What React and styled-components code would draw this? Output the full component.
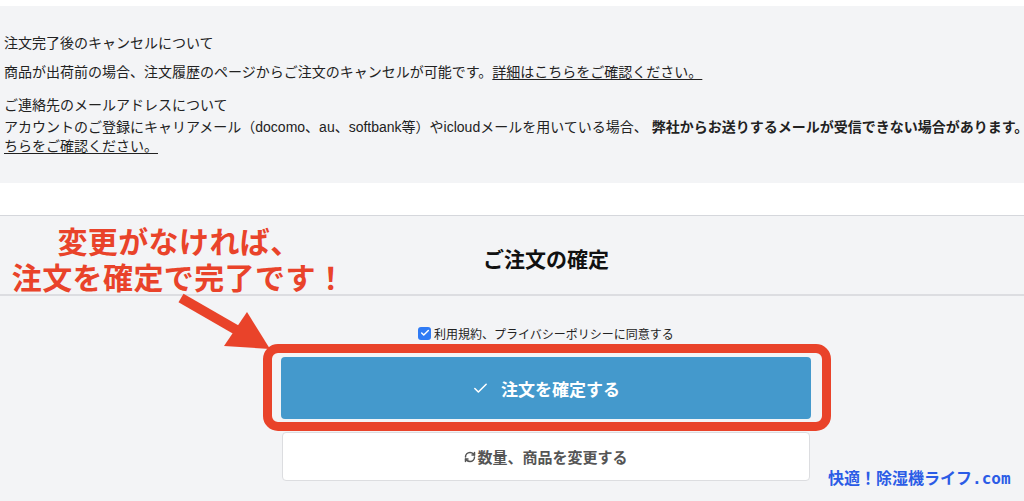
import styled, { createGlobalStyle } from "styled-components";
import { Check, RefreshCw } from "lucide-react";

const GlobalStyle = createGlobalStyle`
  html, body {
    margin: 0;
    padding: 0;
    background: #fff;
    overflow: hidden;
  }
  body {
    font-family: "Liberation Sans", "Noto Sans CJK JP", sans-serif;
    color: #222;
  }
`;

const Page = styled.div`
  width: 1092px;
  padding-top: 6px;
`;

const NoticePanel = styled.section`
  background: #f3f4f6;
  padding: 28px 4px 27px;
  font-size: 14px;
  line-height: 19px;
`;

const NoticeTitle = styled.div`
  margin-top: ${(p) => p.$gap || 0}px;
`;

const NoticeBody = styled.div`
  margin-top: ${(p) => p.$gap || 0}px;
  white-space: nowrap;
`;

const Link = styled.a`
  color: inherit;
  text-decoration: underline;
  text-underline-offset: 2px;
`;

const Strong = styled.b`
  font-weight: 700;
  margin-left: 4px;
`;

const Spacer = styled.div`
  height: 32px;
`;

const ConfirmSection = styled.section`
  position: relative;
  background: #f3f4f6;
  border-top: 1px solid #d5d7dc;
  padding-bottom: 20px;
`;

const SectionHeader = styled.header`
  height: 80px;
  display: flex;
  align-items: center;
  justify-content: center;
  border-bottom: 2px solid #dcdde1;
  padding-top: 5px;
  box-sizing: border-box;
`;

const HeaderTitle = styled.h2`
  margin: 0;
  font-size: 21px;
  font-weight: 700;
  color: #111;
  font-family: "Noto Sans CJK JP", sans-serif;
`;

const Actions = styled.div`
  width: 530px;
  margin: 0 auto;
  display: flex;
  flex-direction: column;
  align-items: center;
`;

const AgreeRow = styled.label`
  display: flex;
  align-items: center;
  gap: 3px;
  margin-top: 29px;
  height: 16px;
  font-size: 12px;
  color: #222;
  font-family: "Noto Sans CJK JP", sans-serif;
`;

const CheckBox = styled.span`
  width: 13px;
  height: 13px;
  border-radius: 3px;
  background: #2f7bf5;
  display: inline-flex;
  align-items: center;
  justify-content: center;
  color: #fff;
`;

const PrimaryWrap = styled.div`
  position: relative;
  width: 100%;
  margin-top: 16px;
`;

const Highlight = styled.div`
  position: absolute;
  top: -13px;
  left: -18px;
  right: -20px;
  bottom: -12px;
  border: 9px solid #e9432a;
  border-radius: 15px;
  pointer-events: none;
`;

const Button = styled.button`
  width: 100%;
  display: flex;
  align-items: center;
  justify-content: center;
  gap: ${(p) => (p.$primary ? 12 : 1)}px;
  height: ${(p) => (p.$primary ? 62 : 49)}px;
  border-radius: 4px;
  border: ${(p) => (p.$primary ? "none" : "1px solid #dcdde0")};
  background: ${(p) => (p.$primary ? "#4499cc" : "#fff")};
  color: ${(p) => (p.$primary ? "#fff" : "#555")};
  font-family: "Noto Sans CJK JP", sans-serif;
  font-size: ${(p) => (p.$primary ? 17 : 15)}px;
  font-weight: 700;
  cursor: pointer;
  padding: 0;
`;

const SecondaryButton = styled(Button)`
  margin-top: 13px;
  width: 528px;
`;

const Annotation = styled.div`
  position: absolute;
  top: 6px;
  left: 10px;
  width: 338px;
  text-align: center;
  color: #e9432a;
  font-family: "Noto Sans CJK JP", sans-serif;
  font-weight: 700;
  font-size: 30px;
  line-height: 36px;
  letter-spacing: 0.4px;
`;

const ArrowSvg = styled.svg`
  position: absolute;
  left: 0;
  top: 0;
  width: 300px;
  height: 150px;
  pointer-events: none;
`;

const Watermark = styled.div`
  position: absolute;
  left: 828px;
  top: 249px;
  color: #2b5ce6;
  font-family: "DejaVu Sans Mono", "Noto Sans CJK JP", monospace;
  font-size: 16px;
  font-weight: 700;
  white-space: nowrap;
`;

export default function App() {
  return (
    <>
      <GlobalStyle />
      <Page>
        <NoticePanel>
          <NoticeTitle>注文完了後のキャンセルについて</NoticeTitle>
          <NoticeBody $gap={10}>
            商品が出荷前の場合、注文履歴のページからご注文のキャンセルが可能です。
            <Link href="#">詳細はこちらをご確認ください。</Link>
          </NoticeBody>
          <NoticeTitle $gap={14}>ご連絡先のメールアドレスについて</NoticeTitle>
          <NoticeBody $gap={3}>
            アカウントのご登録にキャリアメール（docomo、au、softbank等）やicloudメールを用いている場合、
            <Strong>弊社からお送りするメールが受信できない場合があります。</Strong>
            <Link href="#">こ</Link>
            <br />
            <Link href="#">ちらをご確認ください。</Link>
          </NoticeBody>
        </NoticePanel>
        <Spacer />
        <ConfirmSection>
          <SectionHeader>
            <HeaderTitle>ご注文の確定</HeaderTitle>
          </SectionHeader>
          <Actions>
            <AgreeRow>
              <CheckBox>
                <Check size={10} strokeWidth={3.5} />
              </CheckBox>
              利用規約、プライバシーポリシーに同意する
            </AgreeRow>
            <PrimaryWrap>
              <Button $primary>
                <Check size={17} strokeWidth={2.2} />
                注文を確定する
              </Button>
              <Highlight />
            </PrimaryWrap>
            <SecondaryButton>
              <RefreshCw size={12} strokeWidth={3} />
              数量、商品を変更する
            </SecondaryButton>
          </Actions>
          <Annotation>
            変更がなければ、
            <br />
            注文を確定で完了です！
          </Annotation>
          <ArrowSvg viewBox="0 0 300 150">
            <line x1="181" y1="82" x2="240" y2="116" stroke="#e9432a" strokeWidth="10" />
            <polygon points="224,130 247,96 270,133" fill="#e9432a" />
          </ArrowSvg>
          <Watermark>快適！除湿機ライフ.com</Watermark>
        </ConfirmSection>
      </Page>
    </>
  );
}
